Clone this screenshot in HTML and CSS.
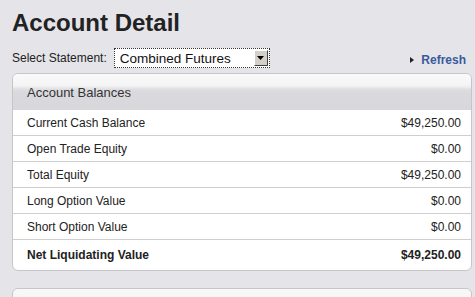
FILE: index.html
```html
<!DOCTYPE html>
<html>
<head>
<meta charset="utf-8">
<link rel="stylesheet" href="styles.css">
</head>
<body>
<div class="page">
  <h1 class="title">Account Detail</h1>
  <div class="toolbar">
    <div class="stmt">
      <span class="stmt-label">Select Statement:</span>
      <div class="select">
        <span class="select-text">Combined Futures</span>
        <span class="select-btn"><svg width="7" height="4" viewBox="0 0 7 4"><path d="M0 0H7L3.5 4Z" fill="#000"/></svg></span>
      </div>
    </div>
    <a class="refresh" href="#"><svg class="tri" width="4" height="6" viewBox="0 0 4 6"><path d="M0 0L4 3L0 6Z" fill="#222"/></svg>Refresh</a>
  </div>
  <div class="panel">
    <div class="panel-head">Account Balances</div>
    <div class="row"><span>Current Cash Balance</span><span>$49,250.00</span></div>
    <div class="row"><span>Open Trade Equity</span><span>$0.00</span></div>
    <div class="row"><span>Total Equity</span><span>$49,250.00</span></div>
    <div class="row"><span>Long Option Value</span><span>$0.00</span></div>
    <div class="row"><span>Short Option Value</span><span>$0.00</span></div>
    <div class="row row-total"><span>Net Liquidating Value</span><span>$49,250.00</span></div>
  </div>
  <div class="panel panel-next">
    <div class="panel-head"></div>
  </div>
</div>
</body>
</html>
```
FILE: styles.css
```css
html, body {
  margin: 0;
  padding: 0;
  background: #e4e4e9;
  font-family: "Liberation Sans", Arial, sans-serif;
  color: #222;
}
.page {
  height: 297px;
  overflow: hidden;
  box-sizing: border-box;
  padding: 9px 3px 0 12px;
}
.title {
  margin: 0;
  font-size: 24px;
  line-height: 28px;
  font-weight: bold;
  color: #222;
}
.toolbar {
  margin-top: 11px;
  display: flex;
  align-items: center;
  justify-content: space-between;
  height: 20px;
}
.stmt {
  display: flex;
  align-items: center;
}
.stmt-label {
  font-size: 12px;
  margin-right: 7px;
  color: #222;
}
.select {
  width: 154px;
  height: 18px;
  border: 1px dotted #333;
  background: #fff;
  display: flex;
  align-items: center;
  justify-content: space-between;
  box-sizing: content-box;
}
.select-text {
  font-size: 13.5px;
  padding-left: 5px;
  color: #111;
}
.select-btn {
  width: 14px;
  height: 16px;
  margin-right: 1px;
  background: #d4d0c8;
  border: 1px solid #fff;
  border-right-color: #404040;
  border-bottom-color: #404040;
  display: flex;
  align-items: center;
  justify-content: center;
  box-sizing: border-box;
}
.refresh {
  display: flex;
  align-items: center;
  font-size: 12px;
  font-weight: bold;
  color: #3a5a9c;
  text-decoration: none;
  margin-right: 6px;
  margin-top: 3px;
}
.tri {
  margin-right: 7px;
}
.panel {
  margin-top: 5px;
  background: #fff;
  border: 1px solid #c6c6c8;
  border-radius: 6px;
  overflow: hidden;
}
.panel-head {
  height: 36px;
  display: flex;
  align-items: center;
  padding-left: 14px;
  font-size: 13px;
  color: #333;
  background: linear-gradient(#fafafa 0, #f4f4f5 30%, #eeeef0 36%, #dfdfe2 42%, #dadade 50%, #d8d8dc 100%);
}
.row {
  height: 25px;
  display: flex;
  align-items: center;
  justify-content: space-between;
  padding: 0 10px 0 14px;
  font-size: 12px;
  color: #222;
  border-bottom: 1px solid #cfcfcf;
}
.row-total {
  height: 30px;
  border-bottom: none;
  font-weight: bold;
}
.panel-next {
  margin-top: 17px;
}
.panel-next .panel-head {
  background: #f7f7f7;
}
```
